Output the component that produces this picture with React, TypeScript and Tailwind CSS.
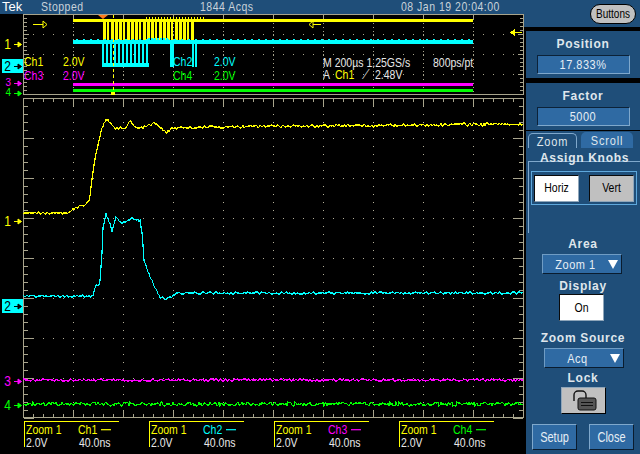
const sans = "font-['Liberation_Sans',Arial,sans-serif]";
// the scope's bitmap font is tall and thin
const tall = "scale-y-[1.2]";

const YELLOW = "#ffff00";
const CYAN = "#00ffff";
const MAGENTA = "#ff00ff";
const GREEN = "#00ff00";
const TAN = "#a8a48c";

// repeatable wobble for the traces
const wobble = (x: number, seed: number) => {
  const v = Math.sin(x * 12.9898 + seed * 78.233) * 43758.5453;
  return v - Math.floor(v) - 0.5;
};

const range = (from: number, to: number, step: number) => {
  const out: number[] = [];
  for (let v = from; v <= to; v += step) out.push(v);
  return out;
};

function trace(points: number[][], seed: number, noise: number) {
  const out: string[] = [];
  let i = 0;
  for (let x = 23; x <= 523; x++) {
    while (i < points.length - 2 && x > points[i + 1][0]) i++;
    const [x0, y0] = points[i];
    const [x1, y1] = points[i + 1];
    const y = y0 + ((y1 - y0) * (x - x0)) / (x1 - x0) + wobble(x, seed) * noise;
    out.push(`${x},${Math.round(y)}`);
  }
  return out.join(" ");
}

const yellowPts = [
  [23, 213], [68, 213], [72, 210], [78, 207], [85, 205], [89, 201], [90, 197], [92, 178], [95, 158],
  [98, 145], [102, 128], [106, 119], [110, 122], [115, 128], [125, 128], [131, 121], [135, 128],
  [143, 128], [155, 123], [160, 128], [166, 132], [173, 128], [200, 127], [300, 126], [523, 124],
];
const cyanPts = [
  [23, 296], [90, 296], [93, 296], [95, 288], [100, 282], [102, 253], [103, 227], [106, 213], [108, 218],
  [112, 231], [116, 218], [122, 223], [133, 219], [140, 221], [142, 233], [144, 260], [150, 277],
  [160, 297], [167, 299], [177, 293], [300, 293], [523, 293],
];

const yellowBars = range(103, 194, 4).map((x, i) => ({ x, w: i % 4 === 1 ? 2 : 3 }));
const cyanBars = [...range(102, 146, 4), 170, 172, 192, 195];

function Overview() {
  return (
    <svg width="524" height="84" viewBox="0 14 524 84" className="block" shapeRendering="crispEdges">
      <rect x="23.5" y="14.5" width="500" height="80" fill="none" stroke={TAN} />
      {range(14, 94, 4).map((y) => {
        const major = (y - 14) % 20 === 0;
        return (
          <g key={y}>
            <line x1="24" x2={major ? 29 : 27} y1={y + 0.5} y2={y + 0.5} stroke={TAN} />
            <line x1={major ? 518 : 520} x2="523" y1={y + 0.5} y2={y + 0.5} stroke={TAN} />
          </g>
        );
      })}
      {[73, 123, 173, 223, 273, 323, 373, 423, 473].map((x) => (
        <g key={x}>
          <line x1={x + 0.5} x2={x + 0.5} y1="15" y2="94" stroke={TAN} strokeDasharray="1 3" />
          <line x1={x + 0.5} x2={x + 0.5} y1="15" y2="19" stroke={TAN} />
        </g>
      ))}
      {[34, 54, 74].map((y) =>
        range(33, 513, 10).map((x) => <rect key={`${x}-${y}`} x={x} y={y} width="1" height="1" fill={TAN} />)
      )}
      <rect x="73" y="19" width="400" height="3" fill={YELLOW} />
      {yellowBars.map((b) => (
        <rect key={b.x} x={b.x} y="19" width={b.w} height="24" fill={YELLOW} />
      ))}
      {range(146, 205, 3).map((x) => (
        <rect key={x} x={x} y="17" width="1" height="2" fill={YELLOW} />
      ))}
      <rect x="73" y="40" width="400" height="4" fill={CYAN} />
      {range(76, 470, 7).map((x) => (
        <rect key={x} x={x} y="39" width="2" height="1" fill={CYAN} />
      ))}
      {range(148, 168, 3).map((x) => (
        <rect key={x} x={x} y="38" width="2" height="2" fill={CYAN} />
      ))}
      {cyanBars.map((x) => (
        <rect key={x} x={x} y="44" width="2" height="23" fill={CYAN} />
      ))}
      <rect x="104" y="63" width="45" height="4" fill={CYAN} />
      <rect x="73" y="83" width="400" height="3" fill={MAGENTA} />
      <rect x="73" y="89" width="400" height="3" fill={GREEN} />
      <line x1="113.5" x2="113.5" y1="15" y2="92" stroke={YELLOW} strokeDasharray="3 3" />
      <rect x="111" y="92" width="4" height="3" fill={YELLOW} />
      <polygon points="98,15 108,15 103,19" fill="#ff7a1a" shapeRendering="auto" />
      {/* trigger position flags */}
      <g fill="none" stroke={YELLOW} shapeRendering="auto">
        <path d="M33 24.5H43M43 21l4 3.5-4 3.5z" />
        <path d="M321 24.5H313M313 21l-4 3.5 4 3.5z" />
      </g>
      <path d="M522 32.5H514M514 30l-3 2.5 3 2.5z" fill={YELLOW} stroke={YELLOW} />
    </svg>
  );
}

function MainGraticule() {
  return (
    <svg width="524" height="323" viewBox="0 98 524 323" className="block" shapeRendering="crispEdges">
      <rect x="23.5" y="98.5" width="500" height="319" fill="none" stroke={TAN} />
      {range(23, 523, 10).map((x) => {
        const major = (x - 23) % 50 === 0;
        return (
          <g key={x}>
            <line x1={x + 0.5} x2={x + 0.5} y1="99" y2={major ? 106 : 102} stroke={TAN} />
            <line x1={x + 0.5} x2={x + 0.5} y1={major ? 410 : 414} y2="417" stroke={TAN} />
          </g>
        );
      })}
      {range(98, 418, 8).map((y) => {
        const major = (y - 98) % 40 === 0;
        return (
          <g key={y}>
            <line x1="24" x2={major ? 34 : 28} y1={y + 0.5} y2={y + 0.5} stroke={TAN} />
            <line x1={major ? 513 : 519} x2="523" y1={y + 0.5} y2={y + 0.5} stroke={TAN} />
          </g>
        );
      })}
      {range(73, 473, 50).map((x) =>
        range(106, 410, 8).map((y) => <rect key={`${x}-${y}`} x={x} y={y} width="1" height="1" fill="#b4b09a" />)
      )}
      {range(138, 378, 40).map((y) =>
        range(43, 513, 10).map((x) => <rect key={`${x}-${y}`} x={x} y={y} width="1" height="1" fill="#b4b09a" />)
      )}
      <polyline points={trace(yellowPts, 1, 3)} fill="none" stroke={YELLOW} strokeWidth="1.2" />
      <polyline points={trace(cyanPts, 2, 3)} fill="none" stroke={CYAN} strokeWidth="1.2" />
      <polyline points={trace([[23, 380], [523, 380]], 3, 3)} fill="none" stroke={MAGENTA} strokeWidth="1.2" />
      <polyline points={trace([[23, 404], [523, 404]], 4, 4)} fill="none" stroke={GREEN} strokeWidth="1.2" />
    </svg>
  );
}

function Marker({ n, color, top, boxed, small }: { n: string; color: string; top: number; boxed?: boolean; small?: boolean }) {
  return (
    <div
      className={`absolute left-[2px] flex w-[21px] items-center justify-end gap-[3px] pr-[1px] ${small ? "h-[8px] text-[10px] leading-[8px]" : "h-[14px] text-[12px] leading-[14px]"} ${boxed ? "bg-[#00ffff]" : ""}`}
      style={{ top, color: boxed ? "#000" : color }}
    >
      <span className={small ? "" : "scale-y-[1.25]"}>{n}</span>
      <svg width="8" height="7" viewBox="0 0 8 7">
        <path d="M0 3.5H4M4 1l3.5 2.5L4 6z" fill="currentColor" stroke="currentColor" />
      </svg>
    </div>
  );
}

function Readout({ ch, color }: { ch: string; color: string }) {
  return (
    <div className="w-[125px]">
      <div className="h-[26px] w-[95px] border-t border-l border-[#ffff00] pl-[1px] text-[10.5px] leading-[12px]">
        <div className={`flex pt-[1px] text-[#ffff00] ${tall}`}>
          <span className="w-[52px]">Zoom 1</span>
          <span style={{ color }}>{ch}</span>
          <span className="mt-[6px] ml-[4px] h-px w-[10px]" style={{ background: color }} />
        </div>
        <div className={`mt-[1px] flex text-[#e8e8e8] ${tall}`}>
          <span className="w-[53px]">2.0V</span>
          <span>40.0ns</span>
        </div>
      </div>
    </div>
  );
}

function FieldBox({ value }: { value: string }) {
  return (
    <div className="mx-auto mt-[4px] flex h-[19px] w-[93px] items-center justify-center border border-t-[#0c2238] border-l-[#0c2238] border-r-[#7fa8cc] border-b-[#7fa8cc] bg-[#2f6aa3] text-[11px] tracking-[0.5px] text-[#e6eef5]">
      <span className={tall}>{value}</span>
    </div>
  );
}

function Heading({ children, className = "" }: { children: string; className?: string }) {
  return <div className={`text-center text-[12px] leading-[14px] font-bold tracking-[0.7px] text-[#dfe6ec] ${className}`}>{children}</div>;
}

function DropDown({ value, className = "" }: { value: string; className?: string }) {
  return (
    <div className={`flex h-[20px] w-[80px] items-center border border-t-[#6f9cc4] border-l-[#6f9cc4] border-r-[#0a1c2e] border-b-[#0a1c2e] bg-[#2f6aa3] text-[11px] text-[#e6eef5] ${className}`}>
      <span className={`flex-1 text-center tracking-[0.5px] ${tall}`}>{value}</span>
      <svg width="10" height="9" viewBox="0 0 10 9" className="mr-[3px]">
        <polygon points="0,0 10,0 5,9" fill="#ffffff" />
      </svg>
    </div>
  );
}

function Toggle({ label, on, className = "" }: { label: string; on?: boolean; className?: string }) {
  return (
    <div
      className={`flex h-[27px] w-[45px] items-center justify-center border border-t-[#0a0a0a] border-l-[#0a0a0a] border-r-[#8fa6ba] border-b-[#8fa6ba] text-[10.5px] text-black ${on ? "bg-white" : "bg-[#c0c0c0]"} ${className}`}
    >
      <span className="scale-y-[1.3]">{label}</span>
    </div>
  );
}

function ActionButton({ label }: { label: string }) {
  return (
    <div className="flex h-[26px] w-[45px] items-center justify-center border border-t-[#7fa8cc] border-l-[#7fa8cc] border-r-[#0a1c2e] border-b-[#0a1c2e] bg-[#2f6aa3] text-[11px] text-[#e6eef5]">
      <span className="scale-y-[1.3]">{label}</span>
    </div>
  );
}

export default function App() {
  return (
    <div className={`flex h-[454px] w-[640px] overflow-hidden bg-black ${sans}`}>
      {/* scope screen */}
      <div className="relative w-[524px]">
        <div className="flex h-[14px] items-center bg-[#1f4e79] text-[10.5px] tracking-[0.5px] text-[#c8d2da]">
          <span className="ml-[2px] w-[39px] text-[13px] tracking-normal text-white">Tek</span>
          <span className={`w-[159px] ${tall}`}>Stopped</span>
          <span className={`w-[201px] ${tall}`}>1844 Acqs</span>
          <span className={tall}>08 Jan 19 20:04:00</span>
        </div>
        <Overview />
        <MainGraticule />
        <div className="flex pl-[24px]">
          <Readout ch="Ch1" color={YELLOW} />
          <Readout ch="Ch2" color={CYAN} />
          <Readout ch="Ch3" color={MAGENTA} />
          <Readout ch="Ch4" color={GREEN} />
        </div>

        {/* labels over the screen */}
        <Marker n="1" color={YELLOW} top={37} />
        <Marker n="2" color={CYAN} top={59} boxed />
        <Marker n="3" color={MAGENTA} top={79} small />
        <Marker n="4" color={GREEN} top={89} small />
        <Marker n="1" color={YELLOW} top={214} />
        <Marker n="2" color={CYAN} top={299} boxed />
        <Marker n="3" color={MAGENTA} top={374} />
        <Marker n="4" color={GREEN} top={398} />

        <div className="absolute top-[56px] left-[24px] text-[10.5px] leading-[12px] whitespace-nowrap">
          <div className={`grid grid-cols-[39px_110px_41px_auto] ${tall}`}>
            <span className="text-[#ffff00]">Ch1</span>
            <span className="text-[#ffff00]">2.0V</span>
            <span className="text-[#00ffff]">Ch2</span>
            <span className="text-[#00ffff]">2.0V</span>
            <span className="text-[#ff00ff]">Ch3</span>
            <span className="text-[#ff00ff]">2.0V</span>
            <span className="text-[#00ff00]">Ch4</span>
            <span className="text-[#00ff00]">2.0V</span>
          </div>
        </div>
        <div className="absolute top-[56px] left-[323px] text-[10.5px] leading-[12px] whitespace-nowrap text-[#e8e8e8]">
          <div className={`flex ${tall}`}>
            <span className="w-[110px]">M 200µs 1.25GS/s</span>
            <span>800ps/pt</span>
          </div>
          <div className={`flex ${tall}`}>
            <span className="w-[12px]">A</span>
            <span className="w-[27px] text-[#ffff00]">Ch1</span>
            <span className="w-[13px]">⟋</span>
            <span>2.48V</span>
          </div>
        </div>
      </div>

      {/* side menu */}
      <div className="flex w-[116px] flex-col">
        <div className="flex h-[27px] items-center justify-end bg-[#1f4e79] pr-[4px]">
          <div className="flex h-[20px] w-[46px] items-center justify-center rounded-full border border-black bg-[#c0c0c0] text-[10px] text-black">
            <span className={tall}>Buttons</span>
          </div>
        </div>
        <div className="mt-[4px] ml-[2px] h-[47px] bg-[#1f4e79] pt-[6px]">
          <Heading>Position</Heading>
          <FieldBox value="17.833%" />
        </div>
        <div className="mt-[5px] ml-[2px] h-[47px] bg-[#1f4e79] pt-[6px]">
          <Heading>Factor</Heading>
          <FieldBox value="5000" />
        </div>
        <div className="mt-px ml-[2px] flex flex-1 flex-col bg-[#1f4e79]">
          <div className="flex h-[17px] items-end gap-[4px] pl-[2px] text-[11px] tracking-[0.8px] text-[#dfe6ec]">
            <div className="flex h-[15px] w-[49px] items-center justify-center rounded-t-[5px] border border-[#7fa8cc] border-b-0"><span className={tall}>Zoom</span></div>
            <div className="flex h-[16px] w-[52px] items-center justify-center rounded-t-[5px] bg-[#2f6aa3]"><span className={tall}>Scroll</span></div>
          </div>
          <div className="relative mt-[13px] ml-[2px] h-[72px] border-t border-l border-[#7fa8cc] pt-[9px] pl-[2px]">
            <div className="absolute -top-[11px] left-[9px] px-[2px]">
              <Heading>Assign Knobs</Heading>
            </div>
            <div className="flex h-[34px] w-[106px] items-center justify-between border border-[#5fa8dc] px-[2px]">
              <Toggle label="Horiz" on />
              <Toggle label="Vert" />
            </div>
          </div>
          <Heading className="mt-[4px]">Area</Heading>
          <DropDown value="Zoom 1" className="mt-[3px] ml-[16px]" />
          <Heading className="mt-[5px]">Display</Heading>
          <Toggle label="On" on className="mt-[1px] ml-[33px]" />
          <Heading className="mt-[10px]">Zoom Source</Heading>
          <DropDown value="Acq" className="mt-[3px] ml-[18px]" />
          <Heading className="mt-[3px]">Lock</Heading>
          <div className="mt-[2px] ml-[35px] flex h-[27px] w-[45px] items-center justify-center border border-t-[#8fa6ba] border-l-[#8fa6ba] border-r-black border-b-black bg-[#c0c0c0]">
            <svg width="26" height="21" viewBox="0 0 26 21">
              <path d="M3 11V5a4 4 0 0 1 4-4h4a4 4 0 0 1 4 4v3" fill="none" stroke="#111" strokeWidth="1.4" />
              <rect x="7" y="8" width="18" height="12" rx="2" fill="#555" stroke="#111" />
              <path d="M10 12.5h12M10 15.5h12" stroke="#111" strokeWidth="1" />
            </svg>
          </div>
          <div className="mt-[10px] flex justify-between px-[6px]">
            <ActionButton label="Setup" />
            <ActionButton label="Close" />
          </div>
        </div>
      </div>
    </div>
  );
}
